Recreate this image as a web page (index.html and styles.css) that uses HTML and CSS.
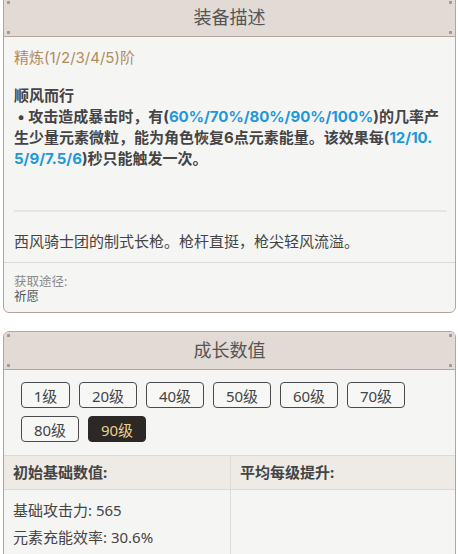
FILE: index.html
```html
<!DOCTYPE html>
<html lang="zh-CN">
<head>
  <meta charset="UTF-8">
  <meta name="viewport" content="width=device-width, initial-scale=1.0">
  <title>装备描述</title>
  <link rel="stylesheet" href="styles.css">
</head>
<body>
  <!-- 装备描述 -->
  <section class="card card-first">
    <div class="card-head">装备描述</div>
    <div class="desc">
      <p class="refine">精炼(1/2/3/4/5)阶</p>
      <p class="skill-name">顺风而行</p>
      <p class="skill-text">&nbsp;• 攻击造成暴击时，有(<span class="num">60%/70%/80%/90%/100%</span>)的几率产生少量元素微粒，能为角色恢复6点元素能量。该效果每(<span class="num">12/10.5/9/7.5/6</span>)秒只能触发一次。</p>
      <hr class="line">
      <p class="story">西风骑士团的制式长枪。枪杆直挺，枪尖轻风流溢。</p>
    </div>
    <div class="source">
      <p class="source-label">获取途径:</p>
      <p class="source-value">祈愿</p>
    </div>
  </section>

  <!-- 成长数值 -->
  <section class="card">
    <div class="card-head">成长数值</div>
    <div class="levels">
      <button class="lv">1级</button>
      <button class="lv">20级</button>
      <button class="lv">40级</button>
      <button class="lv">50级</button>
      <button class="lv">60级</button>
      <button class="lv">70级</button>
      <button class="lv">80级</button>
      <button class="lv active">90级</button>
    </div>
    <div class="stats">
      <div class="stats-head">初始基础数值:</div>
      <div class="stats-head">平均每级提升:</div>
      <div class="stats-col">
        <p>基础攻击力: 565</p>
        <p>元素充能效率: 30.6%</p>
      </div>
      <div class="stats-col"></div>
    </div>
  </section>
</body>
</html>
```

FILE: styles.css
```css
body {
  margin: 0;
  padding: 0 2px 0 3px;
  background: #ffffff;
  font-family: "Noto Sans", "Noto Sans CJK SC", sans-serif;
  font-size: 15px;
  color: #444;
}

p {
  margin: 0;
}

.card {
  border: 1px solid #b3a59c;
  border-radius: 6px;
  background: #f5f5f4;
  overflow: hidden;
  margin-bottom: 18px;
}

.card-first {
  margin-top: -2px;
  border-top-left-radius: 0;
  border-top-right-radius: 0;
}

.card-head {
  position: relative;
  height: 37px;
  line-height: 37px;
  text-align: center;
  font-size: 18px;
  color: #555;
  background: #e2dad4;
  border-bottom: 1px solid #b3a59c;
}

/* little corner rivets */
.card-head::before,
.card-head::after {
  content: "";
  position: absolute;
  top: 2px;
  width: 3px;
  height: 3px;
  background: #a8999a;
  box-shadow: 0 30px 0 #a8999a;
}

.card-head::before {
  left: 3px;
}

.card-head::after {
  right: 3px;
}

/* description */
.desc {
  padding: 10px 8px 10px 10px;
  font-family: Inter, "Noto Sans CJK SC", sans-serif;
}

.refine {
  color: #b08c5e;
  line-height: 21px;
}

.skill-name {
  margin-top: 17px;
  font-weight: bold;
  line-height: 21px;
}

.skill-text {
  font-weight: bold;
  line-height: 21px;
  word-break: break-all;
}

.num {
  color: #1d98d8;
}

.line {
  margin: 41px 0 19px;
  border: none;
  border-top: 2px solid #e6e5e4;
}

.story {
  line-height: 21px;
}

.source {
  border-top: 1px solid #dcdad8;
  padding: 11px 10px 8px;
  font-size: 12.5px;
  line-height: 15px;
}

.source-label {
  color: #8a8a8a;
}

.source-value {
  color: #555;
}

/* levels */
.levels {
  display: flex;
  flex-wrap: wrap;
  gap: 8px 9px;
  padding: 12px 17px 13px;
}

.lv {
  height: 26px;
  padding: 0 11px;
  font-family: inherit;
  font-size: 15px;
  color: #444;
  background: #f7f7f6;
  border: 1px solid #4a4a4a;
  border-radius: 4px;
  min-width: 58px;
}

.lv:first-child {
  min-width: 49px;
}

.lv.active {
  background: #2b2825;
  border-color: #2b2825;
  color: #efd08e;
}

/* stats table */
.stats {
  display: grid;
  grid-template-columns: 227px 1fr;
  border-top: 1px solid #dddad6;
}

.stats-head {
  height: 33px;
  line-height: 33px;
  padding: 0 9px;
  font-weight: bold;
  background: #eeebe7;
  border-bottom: 1px solid #dddad6;
}

.stats-head:first-child,
.stats-col:nth-child(3) {
  border-right: 1px solid #dddad6;
}

.stats-col {
  padding: 7px 9px 10px;
  min-height: 60px;
}

.stats-col p {
  line-height: 27px;
}
```
